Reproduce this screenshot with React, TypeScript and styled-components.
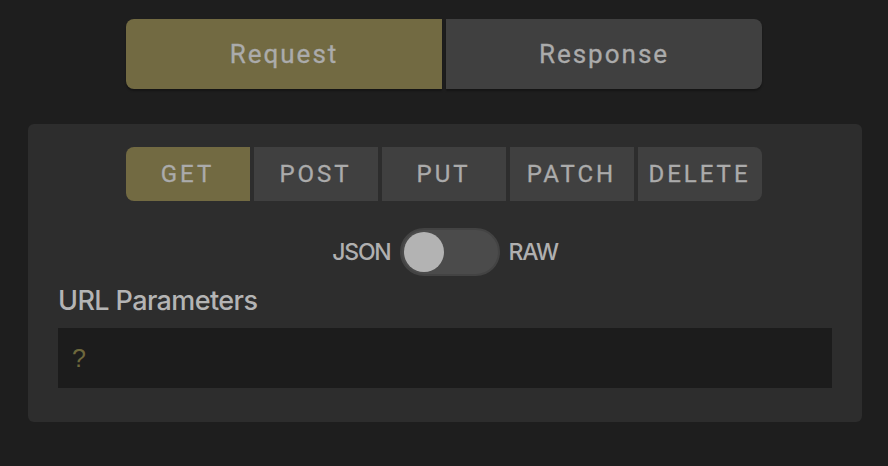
import React, { useState } from 'react'
import styled, { createGlobalStyle } from 'styled-components'

const GlobalStyle = createGlobalStyle`
  html, body {
    margin: 0;
    padding: 0;
    background: #1e1e1e;
  }
`

const Root = styled.div`
  width: 888px;
  min-height: 466px;
  box-sizing: border-box;
  padding-top: 19px;
  background: #1e1e1e;
  font-family: Roboto, 'Liberation Sans', sans-serif;
`

const TabBar = styled.div`
  display: flex;
  gap: 4px;
  width: 636px;
  margin: 0 auto;
`

const Tab = styled.div<{ active?: boolean }>`
  flex: 1;
  height: 70px;
  display: flex;
  align-items: center;
  justify-content: center;
  background: ${(p) => (p.active ? '#726a42' : '#404040')};
  color: #ababab;
  font-size: 26px;
  letter-spacing: 2px;
  -webkit-text-stroke: 0.3px #ababab;
  box-shadow: 0 2px 2px rgba(0, 0, 0, 0.3);
  cursor: pointer;
  &:first-child {
    border-radius: 8px 0 0 8px;
  }
  &:last-child {
    border-radius: 0 8px 8px 0;
  }
`

const Panel = styled.div`
  width: 834px;
  margin: 35px 0 0 28px;
  box-sizing: border-box;
  padding: 23px 30px 34px;
  background: #2d2d2d;
  border-radius: 6px;
`

const MethodGroup = styled.div`
  display: flex;
  justify-content: center;
  gap: 4px;
  padding-right: 2px;
`

const Method = styled.div<{ active?: boolean }>`
  width: 124px;
  height: 54px;
  display: flex;
  align-items: center;
  justify-content: center;
  padding-right: 1px;
  box-sizing: border-box;
  background: ${(p) => (p.active ? '#726a42' : '#404040')};
  color: #ababab;
  font-size: 24px;
  letter-spacing: 3px;
  -webkit-text-stroke: 0.3px #ababab;
  cursor: pointer;
  &:first-child {
    border-radius: 8px 0 0 8px;
  }
  &:last-child {
    border-radius: 0 8px 8px 0;
  }
`

const SwitchRow = styled.div`
  display: flex;
  align-items: center;
  justify-content: center;
  gap: 9px;
  margin-top: 27px;
`

const SwitchLabel = styled.span`
  font-family: Inter, 'Liberation Sans', sans-serif;
  font-size: 23px;
  font-weight: 500;
  letter-spacing: -1.2px;
  color: #b0b0b0;
`

const Track = styled.div`
  position: relative;
  width: 100px;
  height: 48px;
  box-sizing: border-box;
  border-radius: 24px;
  background: #4b4b4b;
  border: 2px solid #434343;
  cursor: pointer;
`

const Knob = styled.div<{ on: boolean }>`
  position: absolute;
  top: 2px;
  left: ${(p) => (p.on ? '54px' : '2px')};
  width: 40px;
  height: 40px;
  border-radius: 50%;
  background: #b3b3b3;
  transition: left 0.2s;
`

const FieldLabel = styled.div`
  margin-top: 10px;
  font-family: Inter, 'Liberation Sans', sans-serif;
  font-size: 27px;
  font-weight: 500;
  line-height: 30px;
  letter-spacing: -0.6px;
  color: #b4b4b4;
`

const ParamInput = styled.div`
  margin-top: 12px;
  height: 60px;
  display: flex;
  align-items: center;
  padding-left: 14px;
  background: #1c1c1c;
  color: #6e683c;
  font-family: 'Liberation Sans', Arial, sans-serif;
  font-size: 25px;
`

const methods = ['GET', 'POST', 'PUT', 'PATCH', 'DELETE']

export default function App() {
  const [tab, setTab] = useState('Request')
  const [method, setMethod] = useState('GET')
  const [raw, setRaw] = useState(false)

  return (
    <Root>
      <GlobalStyle />
      <TabBar>
        {['Request', 'Response'].map((t) => (
          <Tab key={t} active={tab === t} onClick={() => setTab(t)}>
            {t}
          </Tab>
        ))}
      </TabBar>
      <Panel>
        <MethodGroup>
          {methods.map((m) => (
            <Method key={m} active={method === m} onClick={() => setMethod(m)}>
              {m}
            </Method>
          ))}
        </MethodGroup>
        <SwitchRow>
          <SwitchLabel>JSON</SwitchLabel>
          <Track onClick={() => setRaw(!raw)}>
            <Knob on={raw} />
          </Track>
          <SwitchLabel>RAW</SwitchLabel>
        </SwitchRow>
        <FieldLabel>URL Parameters</FieldLabel>
        <ParamInput>?</ParamInput>
      </Panel>
    </Root>
  )
}
